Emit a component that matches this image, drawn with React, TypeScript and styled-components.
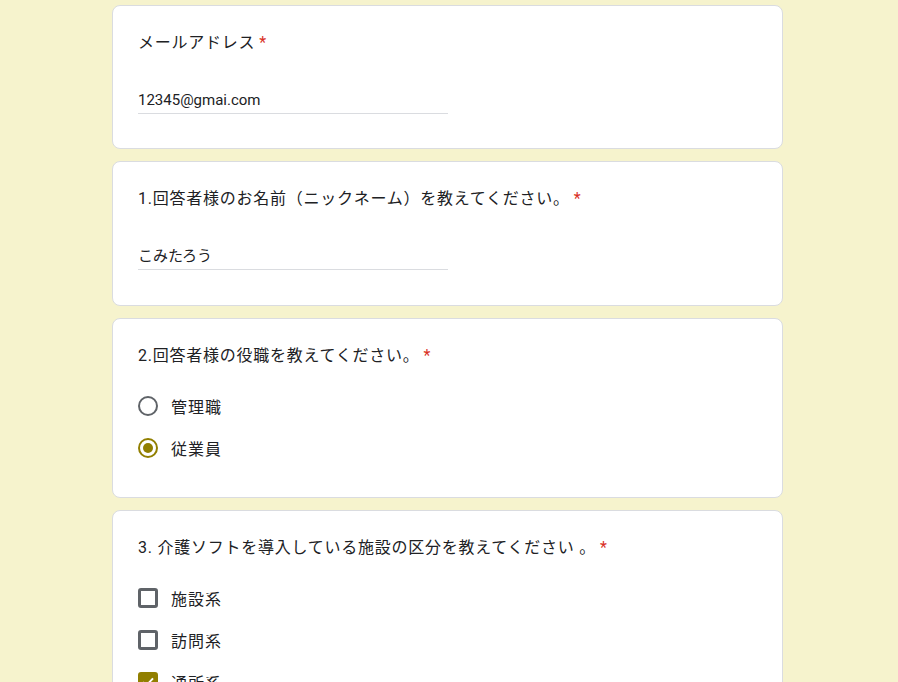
import React, { useState } from "react";
import styled, { createGlobalStyle } from "styled-components";

const ACCENT = "#917f00";
const TEXT = "#202124";

const GlobalStyle = createGlobalStyle`
  html, body {
    margin: 0;
    padding: 0;
    overflow: hidden;
    background: #f6f3cd;
  }
  body {
    font-family: Roboto, "Noto Sans CJK JP", sans-serif;
    color: ${TEXT};
  }
`;

const Page = styled.div`
  display: flex;
  flex-direction: column;
  align-items: center;
  gap: 12px;
  padding: 5px 3px 0 0;
  min-height: 100vh;
  box-sizing: border-box;
`;

const Card = styled.section<{ $bottom?: number }>`
  width: 671px;
  box-sizing: border-box;
  background: #fff;
  border: 1px solid #dadce0;
  border-radius: 8px;
  padding: 25px 24px ${(p) => p.$bottom ?? 24}px 25px;
  flex-shrink: 0;
`;

const Title = styled.div`
  font-family: Roboto, "Noto Sans CJK JP", sans-serif;
  font-size: 16px;
  line-height: 24px;
  letter-spacing: 0.75px;
  color: ${TEXT};
  white-space: nowrap;
`;

const Required = styled.span`
  color: #d93025;
  padding-left: 4px;
  letter-spacing: 0;
`;

const InputLine = styled.div`
  margin-top: 33px;
  width: 310px;
  padding-bottom: 1px;
  border-bottom: 1px solid #dadce0;
  font-family: Roboto, "Noto Sans CJK JP", sans-serif;
  font-size: 15px;
  line-height: 24px;
  color: ${TEXT};
`;

const Options = styled.div`
  margin-top: 17px;
  display: flex;
  flex-direction: column;
`;

const Option = styled.label`
  display: flex;
  align-items: center;
  height: 42px;
  gap: 13px;
  cursor: pointer;
`;

const OptionLabel = styled.span`
  font-family: "Noto Sans CJK JP", sans-serif;
  font-size: 16px;
  line-height: 24px;
  letter-spacing: 1px;
  color: ${TEXT};
`;

const Radio = styled.span<{ $on: boolean }>`
  width: 20px;
  height: 20px;
  box-sizing: border-box;
  border-radius: 50%;
  border: 2px solid ${(p) => (p.$on ? ACCENT : "#5f6368")};
  display: flex;
  align-items: center;
  justify-content: center;
  flex-shrink: 0;
  &::after {
    content: "";
    width: 10px;
    height: 10px;
    border-radius: 50%;
    background: ${ACCENT};
    display: ${(p) => (p.$on ? "block" : "none")};
  }
`;

const Box = styled.span<{ $on: boolean }>`
  width: 20px;
  height: 20px;
  box-sizing: border-box;
  border-radius: 3px;
  border: 3px solid ${(p) => (p.$on ? ACCENT : "#5f6368")};
  background: ${(p) => (p.$on ? ACCENT : "#fff")};
  display: flex;
  align-items: center;
  justify-content: center;
  flex-shrink: 0;
`;

function Check() {
  return (
    <svg width="14" height="14" viewBox="0 0 14 14">
      <path d="M2 7.2 L5.4 10.4 L12 3.4" fill="none" stroke="#fff" strokeWidth="2" />
    </svg>
  );
}

const roles = ["管理職", "従業員"];
const kinds = ["施設系", "訪問系", "通所系", "居宅介護支援"];

export default function App() {
  const [role, setRole] = useState("従業員");
  const [picked, setPicked] = useState<string[]>(["通所系"]);

  const toggle = (k: string) =>
    setPicked((cur) => (cur.includes(k) ? cur.filter((x) => x !== k) : [...cur, k]));

  return (
    <>
      <GlobalStyle />
      <Page>
        <Card $bottom={34}>
          <Title>
            メールアドレス<Required>*</Required>
          </Title>
          <InputLine>12345@gmai.com</InputLine>
        </Card>

        <Card $bottom={35}>
          <Title>
            1.回答者様のお名前（ニックネーム）を教えてください。<Required>*</Required>
          </Title>
          <InputLine>こみたろう</InputLine>
        </Card>

        <Card $bottom={28}>
          <Title>
            2.回答者様の役職を教えてください。<Required>*</Required>
          </Title>
          <Options>
            {roles.map((r) => (
              <Option key={r} onClick={() => setRole(r)}>
                <Radio $on={role === r} />
                <OptionLabel>{r}</OptionLabel>
              </Option>
            ))}
          </Options>
        </Card>

        <Card $bottom={28}>
          <Title>
            3. 介護ソフトを導入している施設の区分を教えてください 。<Required>*</Required>
          </Title>
          <Options>
            {kinds.map((k) => (
              <Option key={k} onClick={() => toggle(k)}>
                <Box $on={picked.includes(k)}>{picked.includes(k) && <Check />}</Box>
                <OptionLabel>{k}</OptionLabel>
              </Option>
            ))}
          </Options>
        </Card>
      </Page>
    </>
  );
}
